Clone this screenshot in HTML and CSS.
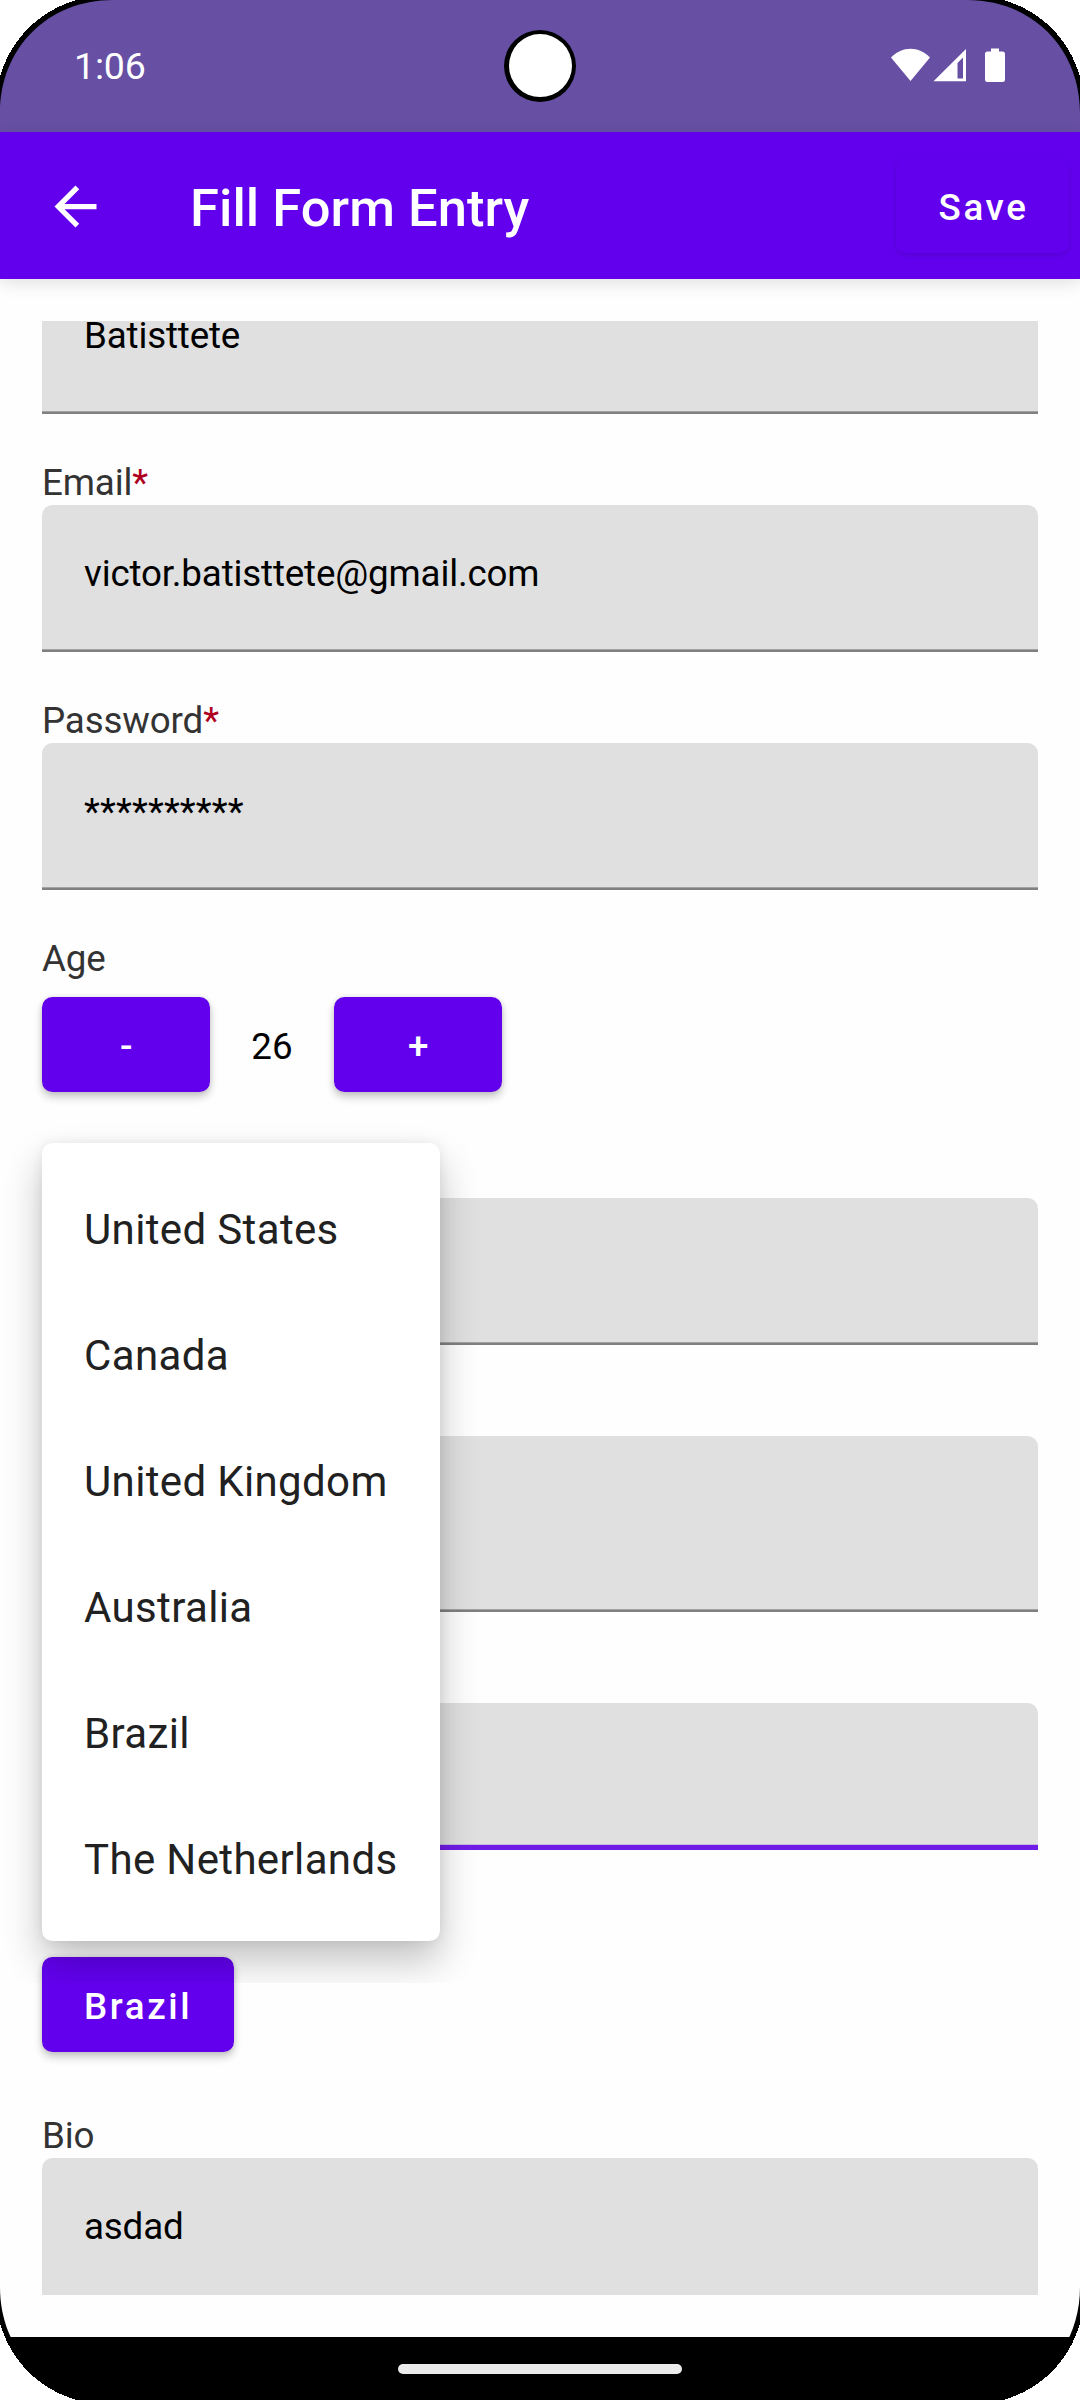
FILE: index.html
```
<!DOCTYPE html>
<html lang="en">
<head>
<meta charset="utf-8">
<title>Fill Form Entry</title>
<link rel="stylesheet" href="styles.css">
</head>
<body>
<div class="screen">
  <header class="status-bar">
    <span class="time">1:06</span>
    <svg class="status-icons" viewBox="0 0 116 36" width="116" height="36">
      <path d="M0 9.5C11 -2.2 28 -2.2 39 9.5L19.5 33Z"/>
      <path fill-rule="evenodd" d="M42.5 33.3L75 1V33.3ZM66.5 30.5H72V9.5L66.5 15Z"/>
      <path d="M100 0.5H108V3.5H111.5Q114 3.5 114 6V31.5Q114 34 111.5 34H96.5Q94 34 94 31.5V6Q94 3.5 96.5 3.5H100Z"/>
    </svg>
  </header>
  <div class="app-bar">
    <svg class="back" viewBox="0 0 24 24" width="63" height="63"><path d="M20 11H7.83l5.59-5.59L12 4l-8 8 8 8 1.41-1.41L7.83 13H20v-2z"/></svg>
    <h1 class="title">Fill Form Entry</h1>
    <button class="btn save">Save</button>
  </div>
  <main class="content">
    <div class="scroll">
      <div class="group first"><div class="field">Batisttete</div></div>
      <div class="group"><div class="label">Email<span class="req">*</span></div><div class="field">victor.batisttete@gmail.com</div></div>
      <div class="group"><div class="label">Password<span class="req">*</span></div><div class="field masked">**********</div></div>
      <div class="group age">
        <div class="label">Age</div>
        <div class="stepper"><button class="btn step">-</button><span class="count">26</span><button class="btn step">+</button></div>
      </div>
      <div class="group"><div class="label"></div><div class="field"></div></div>
      <div class="group"><div class="label"></div><div class="field tall"></div></div>
      <div class="group"><div class="label"></div><div class="field focused"></div></div>
      <div class="group country"><button class="btn">Brazil</button></div>
      <div class="group"><div class="label">Bio</div><div class="field">asdad</div></div>
    </div>
  </main>
  <footer class="nav-bar"><div class="handle"></div></footer>

  <div class="menu-layer">
    <ul class="menu">
      <li>United States</li>
      <li>Canada</li>
      <li>United Kingdom</li>
      <li>Australia</li>
      <li>Brazil</li>
      <li>The Netherlands</li>
    </ul>
  </div>
  <div class="camera"></div>
  <svg class="corner tl" viewBox="0 0 114 114"><path d="M0 0H113C48 0 0 48 0 113Z"/><path class="outside" d="M0 0H77A110 110 0 0 0 0 77Z"/></svg>
  <svg class="corner tr" viewBox="0 0 114 114"><path d="M0 0H113C48 0 0 48 0 113Z"/><path class="outside" d="M0 0H77A110 110 0 0 0 0 77Z"/></svg>
  <svg class="corner bl" viewBox="0 0 114 114"><path d="M0 0H113C48 0 0 48 0 113Z"/><path class="outside" d="M0 0H77A110 110 0 0 0 0 77Z"/></svg>
  <svg class="corner br" viewBox="0 0 114 114"><path d="M0 0H113C48 0 0 48 0 113Z"/><path class="outside" d="M0 0H77A110 110 0 0 0 0 77Z"/></svg>
</div>
</body>
</html>
```
FILE: styles.css
```
* { box-sizing: border-box; }
body { margin: 0; background: #fff; font-family: Roboto, sans-serif; }

.screen {
  position: relative;
  width: 1080px;
  height: 2400px;
  overflow: hidden;
  display: flex;
  flex-direction: column;
  background: #fefefe;
}

.status-bar {
  height: 132px;
  flex: none;
  background: #6750a4;
  color: #fff;
  display: flex;
  align-items: center;
  justify-content: space-between;
  padding: 0 73px 0 74px;
}
.time { font-size: 37.5px; line-height: 44px; letter-spacing: -.2px; }
.status-icons { fill: #fff; }

.app-bar {
  height: 147px;
  flex: none;
  background: #6200ee;
  color: #fff;
  display: flex;
  align-items: center;
  padding: 0 11px 0 43.5px;
  box-shadow: 0 4px 16px rgba(0, 0, 0, .12);
}
.back { fill: #fff; margin-top: 2px; }
.title { margin: 0 auto 0 83.5px; padding-top: 4px; font-size: 52.5px; font-weight: 500; letter-spacing: .04px; line-height: 62px; }

.btn {
  height: 95px;
  border: 0;
  border-radius: 10.5px;
  background: #6200ee;
  color: #fff;
  font: 500 36.75px/44px Roboto, sans-serif;
  letter-spacing: 2.6px;
  padding: 4px 42px 0;
  box-shadow: 0 5px 8px rgba(0, 0, 0, .22), 0 0 5px rgba(0, 0, 0, .1);
}
.save { width: 173px; padding: 5px 0 0 2px; box-shadow: 0 2px 6px rgba(0, 0, 0, .13); }

.content { height: 2058px; flex: none; padding: 42px; }
.scroll { height: 1974px; overflow: hidden; margin: 0 -42px; padding: 0 42px; }
.group { margin-bottom: 42px; }
.first { margin-top: -54px; }
.label { height: 49px; font-size: 36.75px; line-height: 53px; letter-spacing: -.15px; color: #333; }
.req { color: #b00020; }
.field {
  height: 147px;
  padding: 42px 42px 0;
  border-radius: 10.5px 10.5px 0 0;
  background: #e0e0e0;
  box-shadow: inset 0 -2px #808080, inset 0 -3px #a2a2a2;
  font-size: 36.75px;
  line-height: 53px;
  letter-spacing: -.17px;
  color: #000;
}
.masked { letter-spacing: .15px; }
.tall { height: 176px; }
.focused { box-shadow: inset 0 -5px #711be9, inset 0 -6px #c8b8e2; }
.age { margin-bottom: 57px; }
.stepper { display: flex; align-items: center; margin-top: 16px; }
.step { width: 168px; padding: 4px 0 0 3px; }
.count { width: 124px; padding-top: 3px; text-align: center; font-size: 36.75px; color: #000; }
.country { margin: 107px 0 57px; }
.country .btn { display: block; width: 192px; white-space: nowrap; }

.nav-bar { height: 63px; flex: none; background: #000; display: flex; align-items: center; justify-content: center; }
.handle { width: 284px; height: 10px; margin-top: 1px; border-radius: 5px; background: #ebebeb; }

/* The popup's window ends 42px below the menu, which cuts its shadow off. */
.menu-layer { position: absolute; left: 0; top: 1101px; width: 482px; height: 882px; padding: 42px; overflow: hidden; }
.menu {
  margin: 0;
  padding: 21px 0;
  list-style: none;
  width: 398px;
  height: 798px;
  border-radius: 10.5px;
  background: #fff;
  box-shadow: 0 20px 38px rgba(0, 0, 0, .24), 0 0 12px rgba(0, 0, 0, .07);
}
.menu li { height: 126px; padding-left: 42px; font-size: 42px; line-height: 132px; letter-spacing: .36px; color: #212121; white-space: nowrap; }

.camera { position: absolute; left: 503.5px; top: 29.5px; width: 72.5px; height: 72.5px; border-radius: 50%; border: solid #000; border-width: 4px 4px 5px 5px; background: #fff; }
.corner { position: absolute; width: 114px; height: 114px; fill: #000; }
.outside { fill: #fff; shape-rendering: crispEdges; }
.tl { left: 0; top: 0; }
.tr { right: 0; top: 0; transform: scaleX(-1); }
.bl { left: 0; bottom: 0; transform: scaleY(-1); }
.br { right: 0; bottom: 0; transform: scale(-1); }
```
